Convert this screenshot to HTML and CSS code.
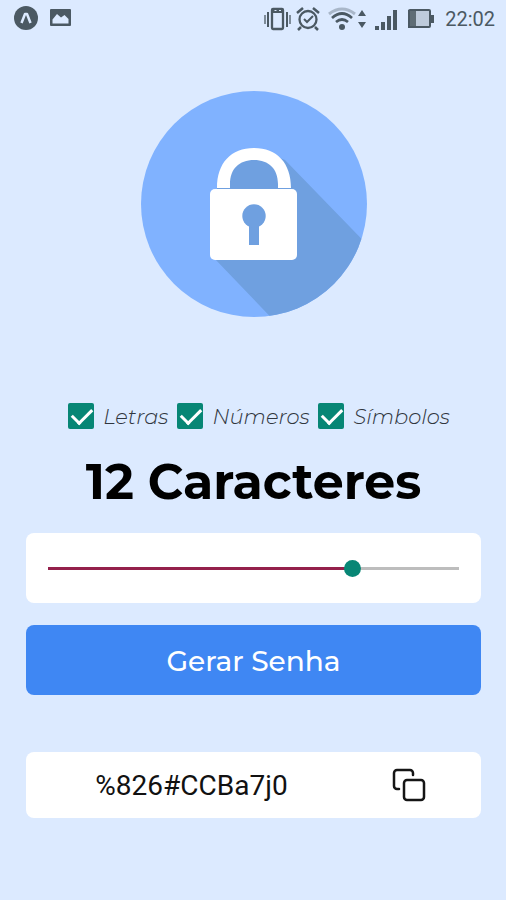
FILE: index.html
```html
<!DOCTYPE html>
<html lang="pt-BR">
<head>
<meta charset="utf-8">
<meta name="viewport" content="width=device-width, initial-scale=1">
<title>Gerador de Senha</title>
<link rel="stylesheet" href="styles.css">
</head>
<body>
<header class="status">
  <svg class="status-left" width="60" height="28" viewBox="0 0 60 28" aria-hidden="true">
    <circle cx="14" cy="13" r="12" fill="#4b5963"/>
    <path d="M9.500 18L13 9H15L18.500 18" fill="none" stroke="#dceaff" stroke-width="2.500" stroke-linejoin="round"/>
    <rect x="38" y="4" width="21" height="17" rx="1" fill="#4b5963"/>
    <path fill="#dceaff" d="M40.500 18.500v-4L45 9l4 3.500 3.500-2.500 4 4v4.500z"/>
  </svg>
  <svg class="status-right" width="176" height="28" viewBox="0 0 176 28" aria-hidden="true">
    <g fill="none" stroke="#4b5963">
      <rect x="11" y="4" width="11" height="20" rx="1" stroke-width="2.300"/>
      <path d="M11 6H22" stroke-width="4"/>
      <path d="M13.500 5.500h2M18 5.500h2" stroke="#dceaff" stroke-width="1"/>
      <path d="M7 7V22M26 7V22" stroke-width="2"/>
      <path d="M4 10V19M29 10V19" stroke-width="2" opacity=".65"/>
      <circle cx="47" cy="14.500" r="8.500" stroke-width="2.300"/>
      <path d="M36 8l6-5M58 8l-6-5M40 22l-3 3M54 22l3 3" stroke-width="2.500"/>
      <path d="M43 14l3 3 6-6" stroke-width="2"/>
      <path d="M68 9Q81 -1 94 9" stroke-width="3" opacity=".35"/>
      <path d="M71 13Q81 4 91 13M75 17Q81 12 87 17" stroke-width="2.700"/>
    </g>
    <g fill="#4b5963">
      <circle cx="81" cy="22" r="3"/>
      <path d="M97 11l4-6 4 6zM97 17l4 6 4-6zM114 21h4v4h-4zM120 17h4v8h-4zM126 11h4v14h-4zM132 5h4v20h-4zM169 10h4v8h-4z"/>
      <rect x="147" y="5" width="8" height="18"/>
    </g>
    <rect x="148" y="5" width="21" height="17" rx="1" fill="#879199" fill-opacity=".35" stroke="#4b5963" stroke-width="2"/>
  </svg>
  <time class="clock">22:02</time>
</header>
<main class="app">
  <svg class="logo" viewBox="0 0 226 226" role="img" aria-label="Cadeado">
    <defs><clipPath id="disc"><circle cx="113" cy="113" r="113"/></clipPath></defs>
    <circle cx="113" cy="113" r="113" fill="#80b2ff"/>
    <path clip-path="url(#disc)" fill="#6fa0e0" d="M82 100V86Q86 65 113 63Q130 62 144 69L240 168V240H143L73 167z"/>
    <path fill="#fff" d="M76 97C76 72 90 57 113 57S150 72 150 97H137V93C137 78 128 69 113 69S89 78 89 93V97z"/>
    <rect x="69" y="98" width="87" height="71" rx="5" fill="#fff"/>
    <path fill="#6fa0e0" d="M76 97h13v1H76zM137 97h13v1H137zM108 135h10v19h-10z"/>
    <circle cx="113" cy="125" r="11.700" fill="#6fa0e0"/>
  </svg>

  <div class="options">
    <label class="option"><input type="checkbox" checked><span>Letras</span></label>
    <label class="option"><input type="checkbox" checked><span>Números</span></label>
    <label class="option"><input type="checkbox" checked><span>Símbolos</span></label>
  </div>

  <h1 class="title"><label for="size">12 Caracteres</label></h1>

  <div class="panel">
    <input class="slider" id="size" type="range" min="0" max="16" value="12">
  </div>

  <button class="generate" type="button">Gerar Senha</button>

  <div class="result">
    <output class="password" for="size">%826#CCBa7j0</output>
    <button class="copy" type="button" aria-label="Copiar senha">
      <svg width="34" height="34" viewBox="0 0 34 34" fill="none" stroke="#151515" stroke-width="2.500" stroke-linecap="round" stroke-linejoin="round" aria-hidden="true">
        <rect x="12" y="12" width="20" height="20" rx="3"/>
        <path d="M7 21H5a3 3 0 0 1-3-3V5a3 3 0 0 1 3-3h13a3 3 0 0 1 3 3v2"/>
      </svg>
    </button>
  </div>
</main>
</body>
</html>
```
FILE: styles.css
```css
* {
  box-sizing: border-box;
}

body {
  margin: 0;
  min-height: 100vh;
  background: #dceaff;
  color: #000;
  font-family: Montserrat, Inter, sans-serif;
}

.status {
  display: flex;
  align-items: center;
  height: 38px;
  padding: 0 11px 0 12px;
}

.status-right {
  margin-left: auto;
}

.clock {
  margin-left: 8px;
  color: #4b5963;
  font: 20px/24px Roboto, sans-serif;
}

.app {
  display: flex;
  flex-direction: column;
  align-items: center;
  padding: 53px 25px 82px 26px;
}

.logo {
  width: 226px;
  height: 226px;
}

.options {
  display: flex;
  gap: 9px;
  margin-top: 86px;
  padding-left: 11px;
}

.option {
  display: flex;
  align-items: center;
  gap: 9px;
  color: #30363e;
  font-size: 21px;
  font-style: italic;
  font-weight: 300;
  line-height: 24px;
}

.option span {
  padding-top: 2px;
}

.option input {
  flex: none;
  appearance: none;
  width: 26px;
  height: 26px;
  margin: 0;
  border-radius: 2px;
  background: #078675;
}

.option input:checked::before {
  content: "";
  display: block;
  width: 9px;
  height: 17px;
  margin: 1px 0 0 8px;
  border: solid #fff;
  border-width: 0 3px 3px 0;
  transform: rotate(45deg);
}

.title {
  margin: 22px 0 20px;
  font-size: 49px;
  font-weight: 700;
  line-height: 62px;
}

.panel,
.generate,
.result {
  width: 100%;
  border-radius: 8px;
}

.panel {
  display: flex;
  align-items: center;
  height: 70px;
  padding: 0 22px;
  background: #fff;
}

.slider {
  appearance: none;
  width: 100%;
  height: 17px;
  margin: 0;
  background: transparent;
}

.slider::-webkit-slider-runnable-track {
  height: 3px;
  background: linear-gradient(to right, #94204b 74%, #bdbdbd 74%);
}

.slider::-webkit-slider-thumb {
  appearance: none;
  width: 17px;
  height: 17px;
  margin-top: -7px;
  border-radius: 50%;
  background: #078675;
}

.generate {
  height: 70px;
  margin-top: 22px;
  padding: 2px 0 0;
  border: 0;
  background: #3f87f3;
  color: #fff;
  font: 500 28px/36px Montserrat, Inter, sans-serif;
}

.result {
  display: flex;
  align-items: center;
  height: 66px;
  margin-top: 57px;
  background: #fff;
}

.password {
  flex: 1;
  padding: 2px 35px 0 0;
  color: #111;
  font: 28px/34px Roboto, sans-serif;
  text-align: center;
}

.copy {
  display: flex;
  margin-right: 55px;
  padding: 0;
  border: 0;
  background: none;
}
```
